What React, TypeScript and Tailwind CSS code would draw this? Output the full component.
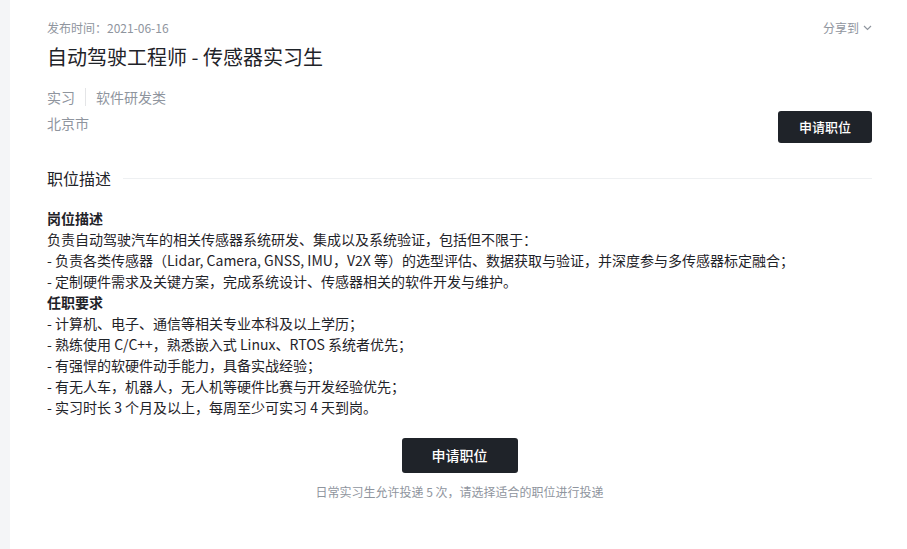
import React from "react";

const font = { fontFamily: '"Noto Sans CJK SC", "Noto Sans", sans-serif' };

export default function App() {
  const lines1 = [
    "负责自动驾驶汽车的相关传感器系统研发、集成以及系统验证，包括但不限于：",
    "- 负责各类传感器（Lidar, Camera, GNSS, IMU，V2X 等）的选型评估、数据获取与验证，并深度参与多传感器标定融合；",
    "- 定制硬件需求及关键方案，完成系统设计、传感器相关的软件开发与维护。",
  ];
  const lines2 = [
    "- 计算机、电子、通信等相关专业本科及以上学历；",
    "- 熟练使用 C/C++，熟悉嵌入式 Linux、RTOS 系统者优先；",
    "- 有强悍的软硬件动手能力，具备实战经验；",
    "- 有无人车，机器人，无人机等硬件比赛与开发经验优先；",
    "- 实习时长 3 个月及以上，每周至少可实习 4 天到岗。",
  ];
  return (
    <div className="flex w-[907px] h-[549px] bg-white overflow-hidden" style={font}>
      <div className="w-[10px] shrink-0 bg-[#f4f5f7]" />
      <div className="flex-1 pl-[37px] pr-[35px] pt-[18px]">
        <div className="flex justify-between items-start">
          <div className="text-[12px] leading-[20px] text-[#8f959e]">发布时间：2021-06-16</div>
          <div className="flex items-center gap-[4px] text-[12px] leading-[20px] text-[#8f959e]">
            <span>分享到</span>
            <svg width="9" height="6" viewBox="0 0 9 6" fill="none">
              <path d="M1 1l3.5 3.5L8 1" stroke="#8f959e" strokeWidth="1.2" />
            </svg>
          </div>
        </div>
        <div className="flex justify-between items-end">
          <div>
            <h1 className="mt-[5px] text-[20px] leading-[28px] text-[#1f2329]">自动驾驶工程师 - 传感器实习生</h1>
            <div className="mt-[16px] flex items-center text-[14px] leading-[20px] text-[#8f959e]">
              <span>实习</span>
              <span className="mx-[10px] w-px h-[18px] bg-[#e4e5e7]" />
              <span>软件研发类</span>
            </div>
            <div className="mt-[6px] text-[14px] leading-[20px] text-[#8f959e]">北京市</div>
          </div>
          <button className="mb-[-10px] w-[94px] h-[32px] rounded-[3px] bg-[#1f2329] text-white text-[13px] font-medium">
            申请职位
          </button>
        </div>
        <div className="mt-[33px] flex items-center gap-[12px]">
          <div className="text-[16px] leading-[24px] text-[#1f2329]">职位描述</div>
          <div className="flex-1 h-px bg-[#eef0f2]" />
        </div>
        <div className="mt-[18px] text-[14px] leading-[21px] text-[#1f2329]">
          <div className="font-bold">岗位描述</div>
          {lines1.map((l) => (
            <div key={l}>{l}</div>
          ))}
          <div className="font-bold">任职要求</div>
          {lines2.map((l) => (
            <div key={l}>{l}</div>
          ))}
        </div>
        <div className="mt-[20px] flex flex-col items-center">
          <button className="w-[116px] h-[35px] rounded-[3px] bg-[#1f2329] text-white text-[14px] font-medium">
            申请职位
          </button>
          <div className="mt-[10px] text-[12px] leading-[18px] text-[#8f959e]">
            日常实习生允许投递 5 次，请选择适合的职位进行投递
          </div>
        </div>
      </div>
    </div>
  );
}
